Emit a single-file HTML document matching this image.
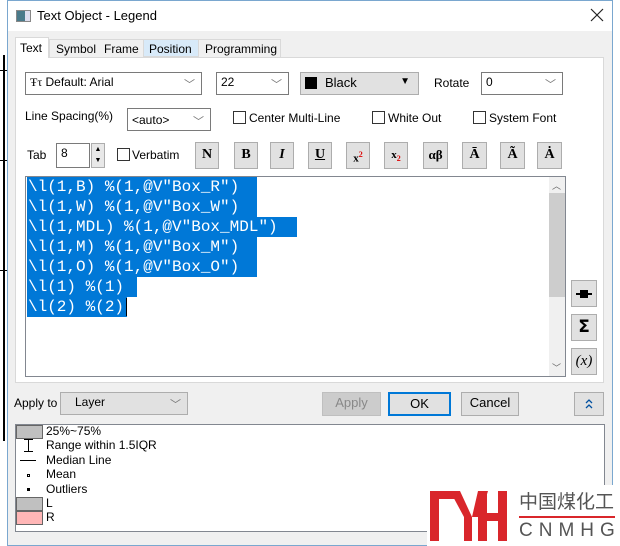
<!DOCTYPE html>
<html><head><meta charset="utf-8"><style>
*{box-sizing:border-box;margin:0;padding:0}
body{width:620px;height:546px;position:relative;overflow:hidden;background:#fff;font-family:"Liberation Sans","DejaVu Sans",sans-serif;font-size:12px;color:#000}
.a{position:absolute}
.win{left:7px;top:0;width:606px;height:546px;background:#f0f0f0;border:1px solid #7aa7cf}
.title{left:8px;top:1px;width:604px;height:30px;background:#fff}
.combo{position:absolute;background:#fff;border:1px solid #7a7a7a;padding:2px 4px;font-size:12px}
.combo .ch{position:absolute;right:6px;top:3px;color:#777;font-size:11px}
.btn{position:absolute;background:#e1e1e1;border:1px solid #adadad;text-align:center;font-family:"Liberation Serif",serif;font-weight:bold;font-size:14px;line-height:24px}
.cb{position:absolute;width:13px;height:13px;border:1px solid #333;background:#fff}
.lbl{position:absolute;font-size:12px}
.code{position:absolute;left:27px;font-family:"Liberation Mono",monospace;font-size:16px;line-height:20px;height:20px;background:#0078d7;color:#fff;white-space:pre;padding-left:1px}
.leg{position:absolute;left:43px;font-size:12px;line-height:14px}
</style></head><body>
<div class="a" style="left:3px;top:55px;width:2px;height:386px;background:#000"></div>
<div class="a" style="left:0;top:70px;width:7px;height:1px;background:#000"></div>
<div class="a" style="left:0;top:160px;width:7px;height:1px;background:#000"></div>
<div class="a" style="left:0;top:270px;width:7px;height:1px;background:#000"></div>
<div class="a win"></div>
<div class="a title"></div>
<div class="a" style="left:16px;top:10px;width:15px;height:12px;border:1px solid #888;background:linear-gradient(90deg,#4a7a8a 0 60%,#dde 60%)"></div>
<div class="lbl" style="left:37px;top:8px;font-size:13px">Text Object - Legend</div>
<svg class="a" style="left:590px;top:8px" width="14" height="14"><path d="M1 1L13 13M13 1L1 13" stroke="#222" stroke-width="1.2"/></svg>
<!-- tabs -->
<div class="a" style="left:15px;top:57px;width:589px;height:326px;background:#fff;border:1px solid #d9d9d9"></div>
<div class="a" style="left:15px;top:37px;width:34px;height:21px;background:#fff;border:1px solid #d9d9d9;border-bottom:none"></div>
<div class="lbl" style="left:20px;top:41px">Text</div>
<div class="a" style="left:49px;top:39px;width:232px;height:18px;background:#f0f0f0;border:1px solid #d9d9d9;border-bottom:none"></div>
<div class="a" style="left:143px;top:39px;width:56px;height:18px;background:#d8eaf9;border:1px solid #d9d9d9"></div>
<div class="lbl" style="left:56px;top:42px">Symbol</div>
<div class="lbl" style="left:104px;top:42px">Frame</div>
<div class="lbl" style="left:149px;top:42px">Position</div>
<div class="lbl" style="left:205px;top:42px">Programming</div>
<!-- row1 -->
<div class="combo" style="left:25px;top:72px;width:177px;height:23px"><span style="font-family:'Liberation Serif',serif">Ŧτ</span> Default: Arial<span class="ch">﹀</span></div>
<div class="combo" style="left:216px;top:72px;width:73px;height:23px">22<span class="ch">﹀</span></div>
<div class="combo" style="left:300px;top:72px;width:119px;height:23px;background:#e1e1e1;border-color:#adadad"><span style="display:inline-block;width:12px;height:12px;background:#000;vertical-align:-2px;margin-right:8px"></span><span style="font-size:13px">Black</span><span style="position:absolute;right:8px;top:3px;font-size:10px">▼</span></div>
<div class="lbl" style="left:434px;top:76px">Rotate</div>
<div class="combo" style="left:481px;top:72px;width:82px;height:23px">0<span class="ch">﹀</span></div>
<!-- row2 -->
<div class="lbl" style="left:25px;top:109px">Line Spacing(%)</div>
<div class="combo" style="left:127px;top:108px;width:84px;height:23px;padding-top:4px">&lt;auto&gt;<span class="ch" style="top:4px">﹀</span></div>
<div class="cb" style="left:233px;top:111px"></div><div class="lbl" style="left:249px;top:111px">Center Multi-Line</div>
<div class="cb" style="left:372px;top:111px"></div><div class="lbl" style="left:388px;top:111px">White Out</div>
<div class="cb" style="left:473px;top:111px"></div><div class="lbl" style="left:489px;top:111px">System Font</div>
<!-- row3 -->
<div class="lbl" style="left:27px;top:148px">Tab</div>
<div class="combo" style="left:56px;top:143px;width:34px;height:25px">8</div>
<div class="a" style="left:91px;top:143px;width:14px;height:25px;border:1px solid #adadad;background:#e8e8e8;font-size:7px;text-align:center;line-height:11px">▲<br>▼</div>
<div class="cb" style="left:117px;top:148px"></div><div class="lbl" style="left:132px;top:148px">Verbatim</div>
<div class="btn" style="left:195px;top:142px;width:24px;height:27px">N</div>
<div class="btn" style="left:234px;top:142px;width:24px;height:27px">B</div>
<div class="btn" style="left:270px;top:142px;width:24px;height:27px;font-style:italic">I</div>
<div class="btn" style="left:308px;top:142px;width:24px;height:27px;text-decoration:underline">U</div>
<div class="btn" style="left:346px;top:142px;width:24px;height:27px;font-size:11px">x<sup style="color:#d00;font-size:8px">2</sup></div>
<div class="btn" style="left:384px;top:142px;width:24px;height:27px;font-size:11px">x<sub style="color:#d00;font-size:8px">2</sub></div>
<div class="btn" style="left:423px;top:142px;width:25px;height:27px;font-size:13px">αβ</div>
<div class="btn" style="left:462px;top:142px;width:25px;height:27px">Ā</div>
<div class="btn" style="left:500px;top:142px;width:25px;height:27px">Ã</div>
<div class="btn" style="left:537px;top:142px;width:25px;height:27px">Ȧ</div>
<!-- text area -->
<div class="a" style="left:25px;top:176px;width:541px;height:201px;background:#fff;border:1px solid #828790"></div>
<div class="a" style="left:549px;top:177px;width:16px;height:199px;background:#f0f0f0"></div>
<div class="a" style="left:549px;top:193px;width:16px;height:104px;background:#cdcdcd"></div>
<div class="lbl" style="left:552px;top:179px;font-size:9px;color:#666">︿</div>
<div class="lbl" style="left:552px;top:361px;font-size:9px;color:#666">﹀</div>
<div class="code" style="top:177px;width:230px">\l(1,B) %(1,@V"Box_R")</div>
<div class="code" style="top:197px;width:230px">\l(1,W) %(1,@V"Box_W")</div>
<div class="code" style="top:217px;width:270px">\l(1,MDL) %(1,@V"Box_MDL")</div>
<div class="code" style="top:237px;width:230px">\l(1,M) %(1,@V"Box_M")</div>
<div class="code" style="top:257px;width:230px">\l(1,O) %(1,@V"Box_O")</div>
<div class="code" style="top:277px;width:110px">\l(1) %(1)</div>
<div class="code" style="top:297px;width:100px">\l(2) %(2)</div>
<div class="a" style="left:126px;top:298px;width:1px;height:18px;background:#000"></div>
<div class="btn" style="left:571px;top:280px;width:26px;height:27px;font-size:0"><div class="a" style="left:4px;top:12px;width:16px;height:2px;background:#000"></div><div class="a" style="left:8px;top:9px;width:8px;height:8px;background:#000"></div></div>
<div class="btn" style="left:571px;top:314px;width:26px;height:27px;font-family:'DejaVu Sans',sans-serif;font-size:17px">Σ</div>
<div class="btn" style="left:571px;top:348px;width:26px;height:27px;font-weight:normal;font-style:italic;font-size:15px">(x)</div>
<!-- bottom -->
<div class="lbl" style="left:14px;top:396px;font-size:12px">Apply to</div>
<div class="combo" style="left:60px;top:392px;width:128px;height:23px;background:#e1e1e1;border-color:#adadad;padding-left:14px">Layer<span class="ch">﹀</span></div>
<div class="combo" style="left:322px;top:392px;width:59px;height:24px;background:#cccccc;border-color:#bfbfbf;color:#888;text-align:center;font-size:13px">Apply</div>
<div class="combo" style="left:388px;top:392px;width:63px;height:24px;background:#e1e1e1;border:2px solid #0078d7;text-align:center;font-size:13px">OK</div>
<div class="combo" style="left:461px;top:392px;width:58px;height:24px;background:#e1e1e1;border-color:#adadad;text-align:center;font-size:13px">Cancel</div>
<div class="combo" style="left:574px;top:392px;width:30px;height:24px;background:#e1e1e1;border-color:#adadad;padding:0"><svg width="28" height="22"><path d="M11 10L14 7L17 10M11 15L14 12L17 15" stroke="#0050a0" stroke-width="1.3" fill="none"/></svg></div>
<div class="a" style="left:15px;top:424px;width:590px;height:108px;background:#fff;border:1px solid #828790"></div>
<div class="a" style="left:16px;top:425px;width:27px;height:14px;background:#c0c0c0;border:1px solid #666"></div>
<div class="leg" style="top:424px;left:46px">25%~75%</div>
<div class="a" style="left:28px;top:439px;width:1px;height:13px;background:#000"></div>
<div class="a" style="left:24px;top:439px;width:9px;height:1px;background:#000"></div>
<div class="a" style="left:24px;top:451px;width:9px;height:1px;background:#000"></div>
<div class="leg" style="top:438px;left:46px">Range within 1.5IQR</div>
<div class="a" style="left:20px;top:460px;width:16px;height:1px;background:#000"></div>
<div class="leg" style="top:453px;left:46px">Median Line</div>
<div class="a" style="left:27px;top:474px;width:3px;height:3px;border:1px solid #000"></div>
<div class="leg" style="top:467px;left:46px">Mean</div>
<div class="a" style="left:27px;top:488px;width:3px;height:3px;background:#000"></div>
<div class="leg" style="top:482px;left:46px">Outliers</div>
<div class="a" style="left:16px;top:497px;width:27px;height:14px;background:#c0c0c0;border:1px solid #666"></div>
<div class="leg" style="top:496px;left:46px">L</div>
<div class="a" style="left:16px;top:511px;width:27px;height:14px;background:#ffb6b6;border:1px solid #666"></div>
<div class="leg" style="top:510px;left:46px">R</div>
<!-- logo -->
<div class="a" style="left:427px;top:485px;width:193px;height:61px;background:#fff"></div>
<svg class="a" style="left:428px;top:487px" width="90" height="56" viewBox="0 0 90 56">
<g fill="#d9262b">
<rect x="2" y="4" width="9" height="50"/>
<rect x="2" y="4" width="28" height="8"/>
<polygon points="22,4 32,4 44,30 44,54 36,54 36,30"/>
<polygon points="50,4 60,4 52,30 44,30"/>
<rect x="50" y="4" width="9" height="50"/>
<rect x="50" y="26" width="28" height="8"/>
<rect x="70" y="4" width="9" height="50"/>
</g></svg>
<div class="a" style="left:519px;top:488px;font-family:'Noto Sans CJK SC',sans-serif;font-size:19px;line-height:26px;color:#555;white-space:nowrap">中国煤化工</div>
<div class="a" style="left:519px;top:516px;width:96px;height:2px;background:#d9262b"></div>
<div class="a" style="left:519px;top:519px;font-size:19px;line-height:24px;letter-spacing:6px;color:#555;white-space:nowrap">CNMHG</div>
</body></html>
